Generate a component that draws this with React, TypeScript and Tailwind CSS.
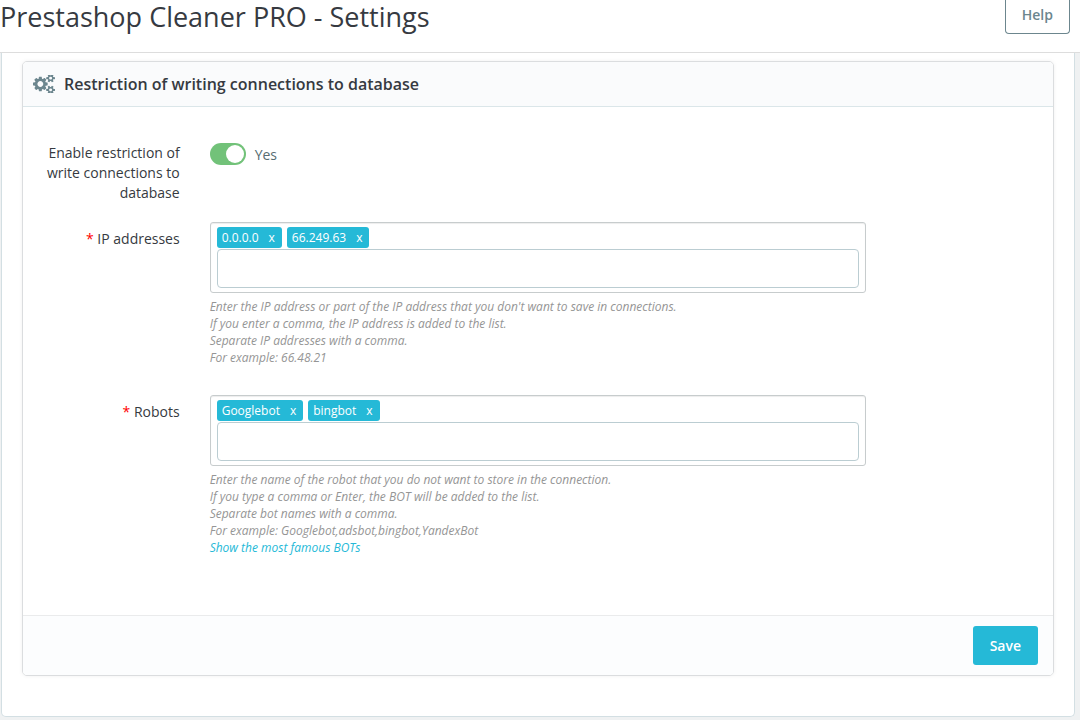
import { useState } from "react";
import type { KeyboardEvent, ReactNode } from "react";

function CogsIcon({ className }: { className?: string }) {
  return (
    <svg className={className} viewBox="0 -144 1920 1568" fill="currentColor" aria-hidden="true">
      <path d="M896 640q0-106-75-181t-181-75-181 75-75 181 75 181 181 75 181-75 75-181zm768 512q0-52-38-90t-90-38-90 38-38 90q0 53 37.5 90.5t90.5 37.5 90.5-37.5 37.5-90.5zm0-1024q0-52-38-90t-90-38-90 38-38 90q0 53 37.5 90.5t90.5 37.5 90.5-37.5 37.5-90.5zm-384 421v185q0 10-7 19.5t-16 10.5l-155 24q-11 35-32 76 34 48 90 115 7 11 7 20 0 12-7 19-23 30-82.5 89.5t-78.5 59.5q-11 0-21-7l-115-90q-37 19-77 31-11 108-23 155-7 24-30 24h-186q-11 0-20-7.5t-10-17.5l-23-153q-34-10-75-31l-118 89q-7 7-20 7-11 0-21-8-144-133-144-160 0-9 7-19 10-14 41-53t47-61q-23-44-35-82l-152-24q-10-1-17-9.5t-7-19.5v-185q0-10 7-19.5t16-10.5l155-24q11-35 32-76-34-48-90-115-7-11-7-20 0-12 7-20 22-30 82-89t79-59q11 0 21 7l115 90q34-18 77-32 11-108 23-154 7-24 30-24h186q11 0 20 7.5t10 17.5l23 153q34 10 75 31l118-89q8-7 20-7 11 0 21 8 144 133 144 160 0 8-7 19-12 16-42 54t-45 60q23 48 34 82l152 23q10 2 17 10.5t7 19.5zm640 533v140q0 16-149 31-12 27-30 52 51 113 51 138 0 4-4 7-122 71-124 71-8 0-46-47t-52-68q-20 2-30 2t-30-2q-14 21-52 68t-46 47q-2 0-124-71-4-3-4-7 0-25 51-138-18-25-30-52-149-15-149-31v-140q0-16 149-31 13-29 30-52-51-113-51-138 0-4 4-7 4-2 35-20t59-34 30-16q8 0 46 46.5t52 67.5q20-2 30-2t30 2q51-71 92-112l6-2q4 0 124 70 4 3 4 7 0 25-51 138 17 23 30 52 149 15 149 31zm0-1024v140q0 16-149 31-12 27-30 52 51 113 51 138 0 4-4 7-122 71-124 71-8 0-46-47t-52-68q-20 2-30 2t-30-2q-14 21-52 68t-46 47q-2 0-124-71-4-3-4-7 0-25 51-138-18-25-30-52-149-15-149-31v-140q0-16 149-31 13-29 30-52-51-113-51-138 0-4 4-7 4-2 35-20t59-34 30-16q8 0 46 46.5t52 67.5q20-2 30-2t30 2q51-71 92-112l6-2q4 0 124 70 4 3 4 7 0 25-51 138 17 23 30 52 149 15 149 31z" />
    </svg>
  );
}

interface TagFieldProps {
  id: string;
  label: string;
  initialTags: string[];
  children: ReactNode;
}

function TagField({ id, label, initialTags, children }: TagFieldProps) {
  const [tags, setTags] = useState(initialTags);
  const [draft, setDraft] = useState("");

  const handleKeyDown = (e: KeyboardEvent<HTMLInputElement>) => {
    if (e.key !== "," && e.key !== "Enter") return;
    e.preventDefault();

    const value = draft.trim();
    if (value && !tags.includes(value)) {
      setTags([...tags, value]);
    }
    setDraft("");
  };

  return (
    <div className="flex">
      <label htmlFor={id} className="w-1/6 px-[15px] pt-[7px] text-right">
        <span className="text-[#ff0000]">*</span> {label}
      </label>
      <div className="w-2/3 px-[15px]">
        <div className="rounded-[3px] border border-[#c7cccd] px-1.5 py-1 shadow-[inset_0_1px_1px_rgba(0,0,0,0.075)]">
          <div className="flex flex-wrap gap-[5px]">
            {tags.map((tag) => (
              <span
                key={tag}
                className="flex h-[21px] items-center gap-1 rounded-[3px] bg-[#25b9d7] pl-[5px] text-[12px] text-white"
              >
                {tag}
                <button
                  type="button"
                  aria-label={`Remove ${tag}`}
                  onClick={() => setTags(tags.filter((t) => t !== tag))}
                  className="cursor-pointer pr-[7px] pl-1.5"
                >
                  x
                </button>
              </span>
            ))}
          </div>
          <input
            id={id}
            type="text"
            value={draft}
            onChange={(e) => setDraft(e.target.value)}
            onKeyDown={handleKeyDown}
            className="mt-px block h-[39px] w-full rounded-[4px] border border-[#bbcdd2] bg-white px-2 focus:border-[#25b9d7] focus:outline-none"
          />
        </div>
        <div className="mt-[5px] text-[12px] leading-[17px] text-[#959595] italic">{children}</div>
      </div>
    </div>
  );
}

export default function App() {
  const [enabled, setEnabled] = useState(true);

  return (
    <div className="flex min-h-screen flex-col bg-[#eff1f2] font-['Open_Sans',sans-serif] text-[14px] leading-[20px] text-[#363a41]">
      {/* Page header */}
      <header className="flex h-[53px] items-start justify-between border-b border-[#dddddd] bg-white pr-2.5">
        <h1 className="text-[27px] leading-[34px]">Prestashop Cleaner PRO - Settings</h1>
        <button
          type="button"
          className="h-[34px] cursor-pointer rounded-b-[4px] border border-t-0 border-[#6c868e] bg-white px-4 pb-1 font-semibold text-[#6c868e]"
        >
          Help
        </button>
      </header>

      <main className="mr-[5px] mb-[3px] ml-px flex-1 rounded-b-[5px] border border-t-0 border-[#d3dfe3] bg-white px-5 pt-2 pb-10">
        <form
          onSubmit={(e) => e.preventDefault()}
          className="rounded-[5px] border border-[#dbdddf] bg-white shadow-[0_0_4px_rgba(0,0,0,0.06)]"
        >
          <div className="flex h-[45px] items-center gap-[9px] rounded-t-[4px] border-b border-[#dbe6e9] bg-[#fafbfc] px-2.5">
            <CogsIcon className="h-[18px] w-[22px] text-[#6c868e]" />
            <h2 className="text-[16px] leading-[24px] font-semibold">
              Restriction of writing connections to database
            </h2>
          </div>

          <div className="pt-9 pb-[59px]">
            <div className="mb-[19px] flex">
              <label htmlFor="enable-restriction" className="w-1/6 px-[15px] text-right">
                Enable restriction of write connections to database
              </label>
              <div className="flex w-2/3 items-start gap-[9px] px-[15px]">
                <input
                  id="enable-restriction"
                  type="checkbox"
                  role="switch"
                  checked={enabled}
                  onChange={(e) => setEnabled(e.target.checked)}
                  className="h-[22px] w-9 cursor-pointer appearance-none rounded-full bg-[#b3c7cd] p-0.5 before:block before:h-[18px] before:w-[18px] before:rounded-full before:bg-white checked:bg-[#72c279] checked:before:translate-x-[14px]"
                />
                <span className="pt-0.5 text-[#576c72]">{enabled ? "Yes" : "No"}</span>
              </div>
            </div>

            <div className="flex flex-col gap-[29px]">
              <TagField id="ip-addresses" label="IP addresses" initialTags={["0.0.0.0", "66.249.63"]}>
                <p>Enter the IP address or part of the IP address that you don't want to save in connections.</p>
                <p>If you enter a comma, the IP address is added to the list.</p>
                <p>Separate IP addresses with a comma.</p>
                <p>For example: 66.48.21</p>
              </TagField>

              <TagField id="robots" label="Robots" initialTags={["Googlebot", "bingbot"]}>
                <p>Enter the name of the robot that you do not want to store in the connection.</p>
                <p>If you type a comma or Enter, the BOT will be added to the list.</p>
                <p>Separate bot names with a comma.</p>
                <p>For example: Googlebot,adsbot,bingbot,YandexBot</p>
                <a href="#famous-bots" className="block text-[#25b9d7] hover:underline">
                  Show the most famous BOTs
                </a>
              </TagField>
            </div>
          </div>

          <div className="flex justify-end rounded-b-[4px] border-t border-[#eaebec] bg-[#fcfdfe] px-[15px] py-2.5">
            <button
              type="submit"
              className="h-[39px] cursor-pointer rounded-[3px] bg-[#25b9d7] px-[17px] font-semibold text-white hover:bg-[#1f9db6]"
            >
              Save
            </button>
          </div>
        </form>
      </main>
    </div>
  );
}
